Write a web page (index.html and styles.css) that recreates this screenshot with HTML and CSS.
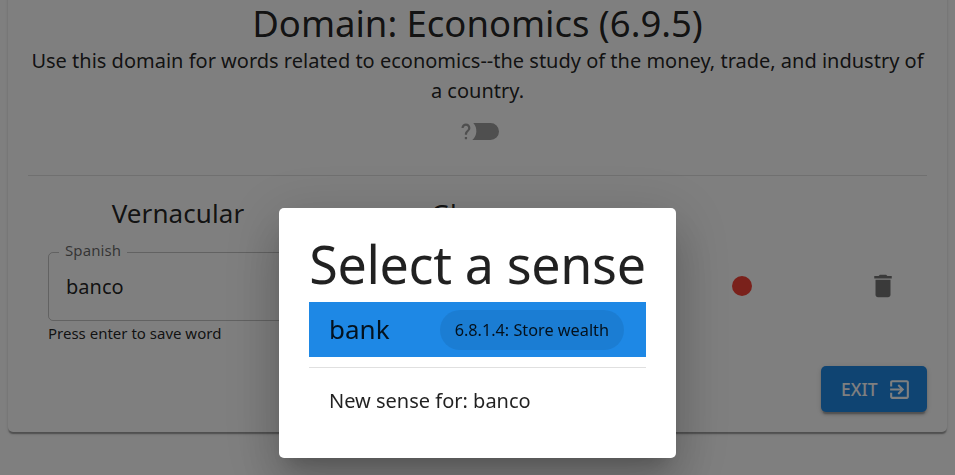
FILE: index.html
```html
<!DOCTYPE html>
<html lang="en">
<head>
<meta charset="utf-8">
<title>Data Entry</title>
<link rel="stylesheet" href="styles.css">
</head>
<body>
<main class="card">
  <h1 class="title">Domain: Economics (6.9.5)</h1>
  <p class="description">Use this domain for words related to economics--the study of the money, trade, and industry of a country.</p>
  <div class="toggle-row">
    <svg class="toggle" width="48" height="27" viewBox="0 0 48 27">
      <path class="track" d="M18.3 5H35.500a8.500 8.500 0 0 1 0 17H17.300a12 12 0 0 0 1-17z"/>
      <g class="mark" transform="translate(-2.500 0) scale(1.120)"><path d="M13 19h-2v-2h2v2zm2.070-7.750l-.9.920C13.450 12.900 13 13.500 13 15h-2v-.5c0-1.100.450-2.100 1.170-2.830l1.240-1.260c.370-.360.590-.860.590-1.410 0-1.100-.9-2-2-2s-2 .9-2 2H8c0-2.210 1.790-4 4-4s4 1.790 4 4c0 .880-.360 1.680-.930 2.250z"/></g>
    </svg>
  </div>
  <hr class="divider">
  <div class="entry">
    <h2 class="heading">Vernacular</h2>
    <h2 class="heading">Glosses</h2>
    <span></span>
    <span></span>
    <div class="cell">
      <fieldset class="field"><legend><span class="label">Spanish</span></legend><span class="value">banco</span></fieldset>
      <p class="helper">Press enter to save word</p>
    </div>
    <div class="cell"><div class="field plain"></div></div>
    <div class="action"><span class="dot"></span></div>
    <div class="action"><svg width="30" height="30" viewBox="0 0 24 24" class="trash"><path d="M6 19c0 1.100.9 2 2 2h8c1.100 0 2-.9 2-2V7H6v12zM19 4h-3.500l-1-1h-5l-1 1H5v2h14V4z"/></svg></div>
  </div>
  <div class="footer">
    <button class="exit">EXIT<svg width="25" height="25" viewBox="0 0 24 24"><path d="M10.090 15.590L11.500 17l5-5-5-5-1.410 1.410L12.670 11H3v2h9.670l-2.580 2.590zM19 3H5c-1.110 0-2 .9-2 2v4h2V5h14v14H5v-4H3v4c0 1.100.890 2 2 2h14c1.100 0 2-.9 2-2V5c0-1.100-.9-2-2-2z"/></svg></button>
  </div>
</main>
<div class="backdrop">
  <section class="dialog">
    <h2 class="dialog-title">Select a sense</h2>
    <div class="sense"><span class="gloss">bank</span><span class="chip">6.8.1.4: Store wealth</span></div>
    <hr class="divider dialog-divider">
    <div class="new-sense">New sense for: banco</div>
  </section>
</div>
</body>
</html>
```

FILE: styles.css
```css
* { box-sizing: border-box; }
html, body { height: 100%; overflow: hidden; }
body {
  margin: 0;
  padding: 0 8px;
  display: flow-root;
  background: #fff;
  color: rgba(0, 0, 0, .87);
  font: 400 20px/1.5 "Noto Sans", sans-serif;
  letter-spacing: 0;
}
h1, h2, p { margin: 0; font-weight: 400; }
.card {
  width: 939px;
  height: 456px;
  margin-top: -24px;
  padding: 20px;
  border-radius: 5px;
  background: #fff;
  box-shadow: 0 2.5px 1.25px -1.25px rgba(0,0,0,.2), 0 1.25px 1.25px rgba(0,0,0,.14), 0 1.25px 3.75px rgba(0,0,0,.12);
}
.title { padding: 5px 0 1px; font-size: 36.5px; line-height: 44px; letter-spacing: -.03px; text-align: center; }
.description { text-align: center; }
.toggle-row { height: 69px; padding-top: 12px; display: flex; justify-content: center; }
.toggle { display: block; margin-left: 2px; }
.track { fill: #9e9e9e; }
.mark { fill: #9e9e9e; }
.divider { height: 1px; margin: 0; border: 0; background: rgba(0,0,0,.12); }
.entry { display: grid; grid-template-columns: 300px 300px 228px 54px; width: 900px; padding-top: 17px; }
.heading { font-size: 26px; line-height: 40px; letter-spacing: .1px; text-align: center; }
.cell { padding: 7px 20px 0; }
.field { height: 81px; margin: 0; padding: 0 17px; border: 1px solid rgba(0,0,0,.23); border-radius: 5px; }
.field legend { padding: 0 6px; margin-left: -7px; font-size: 15px; line-height: 24px; letter-spacing: .1px; color: rgba(0,0,0,.6); }
.label { display: block; transform: translateY(-2px); }
.value { display: block; line-height: 30px; padding-top: 8px; }
.plain { height: 69px; margin-top: 12px; }
.helper { font-size: 15px; line-height: 25px; letter-spacing: 0; }
.action { display: flex; align-items: center; justify-content: center; height: 105px; }
.dot { width: 20px; height: 20px; border-radius: 50%; background: #f44336; }
.trash { fill: rgba(0,0,0,.54); }
.footer { display: flex; justify-content: flex-end; padding-top: 20px; }
.exit {
  display: flex; align-items: center; gap: 10px;
  width: 106px; height: 46px; padding: 0 0 0 20px;
  border: 0; border-radius: 5px; color: #fff; background: #1e88e5;
  font: 500 17.5px/30px "Noto Sans", sans-serif; letter-spacing: 0;
  box-shadow: 0 3.75px 1.25px -2.5px rgba(0,0,0,.2), 0 2.5px 2.5px rgba(0,0,0,.14), 0 1.25px 6.25px rgba(0,0,0,.12);
}
.exit svg { fill: currentColor; }
.backdrop {
  position: fixed; inset: 0; background: rgba(0,0,0,.5);
  display: flex; justify-content: center; align-items: flex-start; padding-top: 208px;
}
.dialog {
  width: 397px; height: 250px; padding: 30px; border-radius: 5px; background: #fff;
  box-shadow: 0 13.75px 18.75px -8.75px rgba(0,0,0,.2), 0 30px 47.5px 3.75px rgba(0,0,0,.14), 0 11.25px 57.5px 10px rgba(0,0,0,.12);
}
.dialog-title { font-size: 52px; line-height: 64px; height: 64px; margin-top: -6px; padding-bottom: 0; letter-spacing: -.35px; white-space: nowrap; text-align: center; margin-bottom: 6px; }
.sense { display: flex; align-items: center; height: 55px; padding: 0 22px 0 20px; justify-content: space-between; background: #1e88e5; }
.gloss { font-size: 26px; letter-spacing: 0; }
.chip { height: 40px; padding: 0 15px; border-radius: 20px; line-height: 40px; font-size: 16.25px; letter-spacing: 0; background: rgba(0,0,0,.08); }
.dialog-divider { margin: 10px 0; }
.new-sense { padding: 8px 20px; height: 45px; }
```
